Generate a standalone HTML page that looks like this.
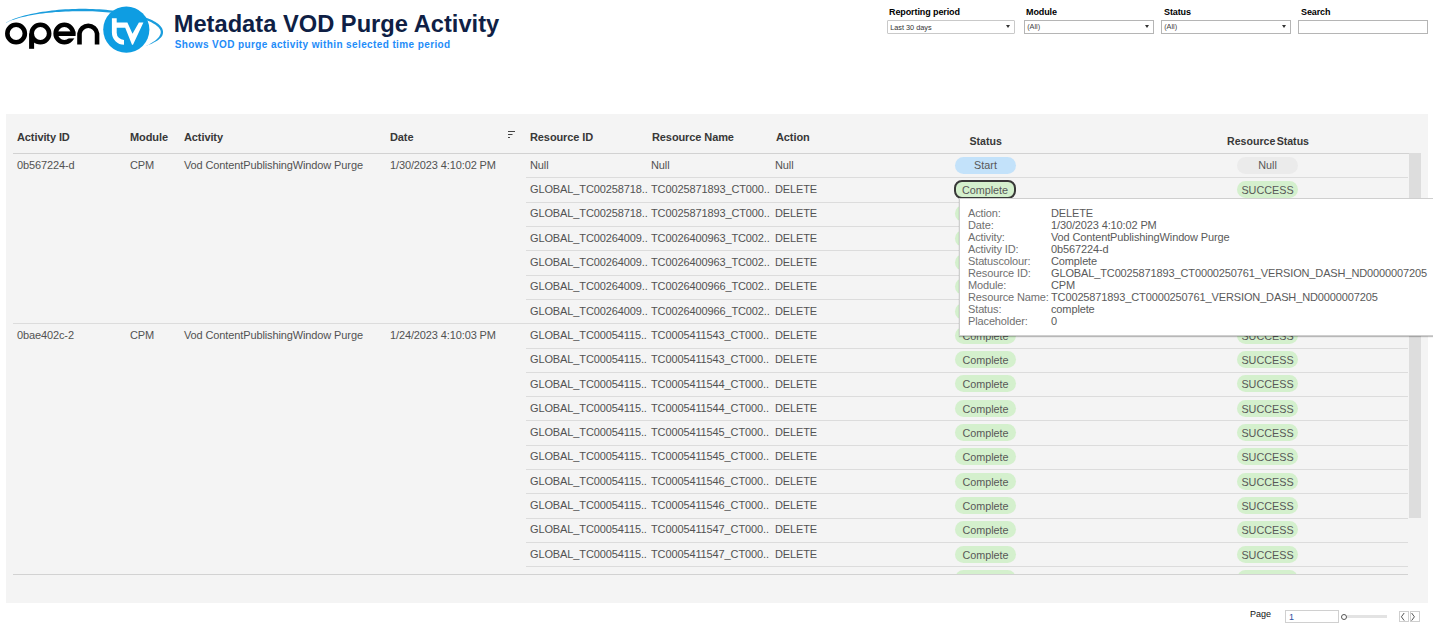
<!DOCTYPE html>
<html><head><meta charset="utf-8">
<style>
html,body{margin:0;padding:0;background:#fff;width:1433px;height:639px;overflow:hidden;position:relative;font-family:"Liberation Sans",sans-serif;}
div{position:absolute;white-space:nowrap;}
#title{left:173.7px;top:8.6px;font-size:23.7px;font-weight:bold;color:#0f1f45;line-height:30px;}
#sub{left:174.7px;top:37.6px;font-size:10px;font-weight:bold;color:#1e8cf8;line-height:14px;letter-spacing:0.39px;}
.fl{font-size:9px;font-weight:bold;color:#000;line-height:12px;top:6px;letter-spacing:-0.1px;}
.fb{top:20px;height:12px;background:#fff;border:1px solid #c9c9c9;border-radius:1px;}
.fb span{position:absolute;left:2.2px;top:1.5px;font-size:7.3px;color:#333;line-height:10px;}
.arr{width:0;height:0;border-left:2.5px solid transparent;border-right:2.5px solid transparent;border-top:3.5px solid #333;top:3.6px;}
#panel{left:6px;top:114px;width:1422px;height:489px;background:#f4f4f4;}
.h{font-size:11px;font-weight:bold;color:#383838;line-height:16px;letter-spacing:-0.1px;}
.t{font-size:11px;color:#525252;line-height:16px;letter-spacing:-0.12px;}
.sep{height:1px;background:#dcdcdc;}
.pill{width:61px;height:17px;border-radius:9px;text-align:center;font-size:10.8px;line-height:18.4px;color:#585858;}
.pb{background:#c3e2fa;}
.r0{line-height:16.8px;}
.pg{background:#d4f0cd;}
.pn{background:#ebebeb;}
.hov{box-sizing:border-box;border:2px solid #383838;width:62px;height:18.5px;margin-left:-1px;margin-top:-0.8px;border-radius:8px;line-height:16.2px;}
#tip{left:959px;top:198px;width:500px;height:136px;background:#fff;border:1px solid #cfcfcf;box-shadow:0 1px 1px rgba(0,0,0,0.25);}
.tl{left:8px;font-size:11px;line-height:12px;color:#707070;letter-spacing:-0.13px;}
.tv{left:91px;font-size:11px;line-height:12px;color:#5a5a5a;letter-spacing:-0.13px;}
</style></head><body>
<svg style="position:absolute;left:0;top:0" width="170" height="60" viewBox="0 0 170 60">
  <path d="M5.96 22.49 L7.67 21.65 L9.48 20.80 L11.40 19.95 L13.44 19.12 L15.60 18.31 L17.86 17.53 L20.23 16.78 L22.71 16.06 L25.28 15.36 L27.94 14.69 L30.69 14.06 L33.52 13.46 L36.43 12.89 L39.42 12.35 L42.47 11.85 L45.58 11.38 L48.76 10.95 L51.98 10.55 L55.25 10.19 L58.56 9.87 L61.91 9.59 L65.29 9.35 L68.69 9.14 L72.11 8.99 L75.54 8.90 L78.97 8.85 L82.41 8.84 L85.84 8.87 L89.26 8.93 L92.66 9.04 L96.04 9.19 L99.39 9.37 L102.71 9.59 L105.98 9.85 L109.21 10.15 L112.39 10.49 L115.51 10.86 L118.57 11.27 L121.57 11.71 L124.49 12.18 L127.34 12.70 L130.10 13.24 L132.78 13.82 L135.37 14.42 L137.86 15.06 L140.26 15.73 L142.55 16.42 L144.74 17.15 L146.82 17.90 L148.79 18.67 L150.64 19.47 L152.37 20.30 L153.99 21.14 L155.48 22.02 L156.84 22.91 L158.08 23.83 L159.19 24.77 L160.17 25.74 L161.02 26.74 L161.73 27.76 L162.29 28.81 L162.70 29.89 L162.96 30.99 L163.05 32.10 L162.97 33.22 L162.73 34.33 L162.33 35.41 L161.72 36.43 L160.96 37.41 L160.07 38.35 L159.05 39.26 L157.91 40.13 L156.65 40.98 L155.27 41.81 L153.77 42.61 L152.15 43.38 L150.41 44.14 L148.55 44.86 L146.62 45.66 L146.53 45.43 L148.45 44.63 L150.21 43.72 L151.84 42.79 L153.34 41.86 L154.70 40.92 L155.92 39.97 L157.01 39.02 L157.94 38.08 L158.73 37.15 L159.37 36.23 L159.87 35.34 L160.23 34.48 L160.52 33.68 L160.69 32.89 L160.75 32.12 L160.68 31.35 L160.50 30.56 L160.20 29.77 L159.76 28.96 L159.20 28.14 L158.49 27.31 L157.64 26.47 L156.66 25.63 L155.53 24.80 L154.27 23.97 L152.87 23.16 L151.35 22.35 L149.69 21.57 L147.91 20.80 L146.01 20.05 L143.99 19.32 L141.86 18.62 L139.62 17.94 L137.27 17.28 L134.82 16.66 L132.28 16.06 L129.64 15.49 L126.91 14.96 L124.10 14.45 L121.21 13.98 L118.25 13.54 L115.23 13.14 L112.13 12.77 L108.99 12.44 L105.79 12.15 L102.54 11.89 L99.25 11.67 L95.93 11.48 L92.58 11.34 L89.20 11.23 L85.81 11.17 L82.40 11.14 L78.99 11.15 L75.58 11.20 L72.18 11.29 L68.78 11.38 L65.40 11.51 L62.05 11.67 L58.72 11.88 L55.43 12.11 L52.17 12.39 L48.96 12.70 L45.80 13.04 L42.70 13.43 L39.65 13.84 L36.67 14.29 L33.77 14.77 L30.94 15.28 L28.19 15.82 L25.52 16.39 L22.95 16.99 L20.47 17.61 L18.09 18.27 L15.81 18.94 L13.63 19.64 L11.56 20.36 L9.60 21.09 L7.77 21.88 L6.08 22.71Z" fill="#1a9ddd"/>
  <g fill="none" stroke="#000" stroke-width="4.6">
    <circle cx="16.1" cy="33.5" r="8.75"/>
    <circle cx="40.4" cy="33.5" r="8.75"/>
    <circle cx="64.35" cy="33.5" r="8.7"/>
    <path d="M79.5 44.5 V33.5 A8.85 8.85 0 0 1 97.05 33.5 V44.5"/>
  </g>
  <rect x="29.1" y="33.5" width="5" height="15.3" fill="#000"/>
  <rect x="55" y="31.4" width="20.5" height="4.6" fill="#000"/>
  <rect x="67.5" y="36" width="9" height="2.4" fill="#fff"/>
  <circle cx="126.3" cy="29.6" r="23.1" fill="#0e9de2"/>
  <g fill="#fff">
    <path d="M111.9 18.2 H116.7 V22.4 H127.4 L132.5 33.7 L138.9 22.4 H143.4 L133 44.7 H132 L125.2 27.8 H116.7 V32.7 A7.3 7.3 0 0 0 124 40 V44.7 A12.1 12.1 0 0 1 111.9 32.7 Z"/>
  </g>
</svg>
<div id="title">Metadata VOD Purge Activity</div>
<div id="sub">Shows VOD purge activity within selected time period</div>

<div class="fl" style="left:889px">Reporting period</div>
<div class="fb" style="left:887px;width:126px"><span>Last 30 days</span><div class="arr" style="left:118px"></div></div>
<div class="fl" style="left:1026px">Module</div>
<div class="fb" style="left:1024px;width:128px;border-color:#b5b5b5;border-radius:0"><span style="top:0.6px;color:#444">(All)</span><div class="arr" style="left:120px"></div></div>
<div class="fl" style="left:1164px">Status</div>
<div class="fb" style="left:1161px;width:128px;border-color:#b5b5b5;border-radius:0"><span style="top:0.6px;color:#444">(All)</span><div class="arr" style="left:120px"></div></div>
<div class="fl" style="left:1301px">Search</div>
<div class="fb" style="left:1297.5px;width:128.5px;border-color:#b5b5b5;border-radius:0"></div>

<div id="panel"></div>
<div class="h" style="left:17px;top:129px">Activity ID</div>
<div class="h" style="left:130px;top:129px">Module</div>
<div class="h" style="left:184px;top:129px">Activity</div>
<div class="h" style="left:390px;top:129px">Date</div>
<div class="h" style="left:530px;top:129px">Resource ID</div>
<div class="h" style="left:652px;top:129px">Resource Name</div>
<div class="h" style="left:776px;top:129px">Action</div>
<div class="h" style="left:969.5px;top:133px;font-size:10.6px;letter-spacing:0">Status</div>
<div class="h" style="left:1227px;top:133px;font-size:10.6px;letter-spacing:0;word-spacing:-1.6px">Resource Status</div>
<svg style="position:absolute;left:507px;top:130px" width="10" height="9"><g fill="#444"><rect x="1" y="1" width="7" height="1"/><rect x="1" y="4" width="4.5" height="1"/><rect x="1" y="7" width="2" height="1"/></g></svg>
<div class="sep" style="left:13px;width:1408px;top:152.5px;background:#d2d2d2"></div>
<div style="left:1408.6px;top:153px;width:12.4px;height:364.6px;background:#dddddd"></div>
<div class="t" style="left:17px;top:156.80px">0b567224-d</div>
<div class="t" style="left:130px;top:156.80px">CPM</div>
<div class="t" style="left:184px;top:156.80px">Vod ContentPublishingWindow Purge</div>
<div class="t" style="left:390px;top:156.80px">1/30/2023 4:10:02 PM</div>
<div class="t" style="left:530px;top:156.80px">Null</div>
<div class="t" style="left:651px;top:156.80px">Null</div>
<div class="t" style="left:775px;top:156.80px">Null</div>
<div class="pill pb r0" style="left:955px;top:156.70px">Start</div>
<div class="pill pn r0" style="left:1237px;top:156.70px">Null</div>
<div class="t" style="left:530px;top:181.10px">GLOBAL_TC00258718..</div>
<div class="t" style="left:651px;top:181.10px">TC0025871893_CT000..</div>
<div class="t" style="left:775px;top:181.10px">DELETE</div>
<div class="pill pg hov" style="left:955px;top:181.00px">Complete</div>
<div class="pill pg" style="left:1237px;top:181.00px">SUCCESS</div>
<div class="t" style="left:530px;top:205.40px">GLOBAL_TC00258718..</div>
<div class="t" style="left:651px;top:205.40px">TC0025871893_CT000..</div>
<div class="t" style="left:775px;top:205.40px">DELETE</div>
<div class="pill pg" style="left:955px;top:205.30px">Complete</div>
<div class="pill pg" style="left:1237px;top:205.30px">SUCCESS</div>
<div class="t" style="left:530px;top:229.70px">GLOBAL_TC00264009..</div>
<div class="t" style="left:651px;top:229.70px">TC0026400963_TC002..</div>
<div class="t" style="left:775px;top:229.70px">DELETE</div>
<div class="pill pg" style="left:955px;top:229.60px">Complete</div>
<div class="pill pg" style="left:1237px;top:229.60px">SUCCESS</div>
<div class="t" style="left:530px;top:254.00px">GLOBAL_TC00264009..</div>
<div class="t" style="left:651px;top:254.00px">TC0026400963_TC002..</div>
<div class="t" style="left:775px;top:254.00px">DELETE</div>
<div class="pill pg" style="left:955px;top:253.90px">Complete</div>
<div class="pill pg" style="left:1237px;top:253.90px">SUCCESS</div>
<div class="t" style="left:530px;top:278.30px">GLOBAL_TC00264009..</div>
<div class="t" style="left:651px;top:278.30px">TC0026400966_TC002..</div>
<div class="t" style="left:775px;top:278.30px">DELETE</div>
<div class="pill pg" style="left:955px;top:278.20px">Complete</div>
<div class="pill pg" style="left:1237px;top:278.20px">SUCCESS</div>
<div class="t" style="left:530px;top:302.60px">GLOBAL_TC00264009..</div>
<div class="t" style="left:651px;top:302.60px">TC0026400966_TC002..</div>
<div class="t" style="left:775px;top:302.60px">DELETE</div>
<div class="pill pg" style="left:955px;top:302.50px">Complete</div>
<div class="pill pg" style="left:1237px;top:302.50px">SUCCESS</div>
<div class="t" style="left:17px;top:326.90px">0bae402c-2</div>
<div class="t" style="left:130px;top:326.90px">CPM</div>
<div class="t" style="left:184px;top:326.90px">Vod ContentPublishingWindow Purge</div>
<div class="t" style="left:390px;top:326.90px">1/24/2023 4:10:03 PM</div>
<div class="t" style="left:530px;top:326.90px">GLOBAL_TC00054115..</div>
<div class="t" style="left:651px;top:326.90px">TC0005411543_CT000..</div>
<div class="t" style="left:775px;top:326.90px">DELETE</div>
<div class="pill pg" style="left:955px;top:326.80px">Complete</div>
<div class="pill pg" style="left:1237px;top:326.80px">SUCCESS</div>
<div class="t" style="left:530px;top:351.20px">GLOBAL_TC00054115..</div>
<div class="t" style="left:651px;top:351.20px">TC0005411543_CT000..</div>
<div class="t" style="left:775px;top:351.20px">DELETE</div>
<div class="pill pg" style="left:955px;top:351.10px">Complete</div>
<div class="pill pg" style="left:1237px;top:351.10px">SUCCESS</div>
<div class="t" style="left:530px;top:375.50px">GLOBAL_TC00054115..</div>
<div class="t" style="left:651px;top:375.50px">TC0005411544_CT000..</div>
<div class="t" style="left:775px;top:375.50px">DELETE</div>
<div class="pill pg" style="left:955px;top:375.40px">Complete</div>
<div class="pill pg" style="left:1237px;top:375.40px">SUCCESS</div>
<div class="t" style="left:530px;top:399.80px">GLOBAL_TC00054115..</div>
<div class="t" style="left:651px;top:399.80px">TC0005411544_CT000..</div>
<div class="t" style="left:775px;top:399.80px">DELETE</div>
<div class="pill pg" style="left:955px;top:399.70px">Complete</div>
<div class="pill pg" style="left:1237px;top:399.70px">SUCCESS</div>
<div class="t" style="left:530px;top:424.10px">GLOBAL_TC00054115..</div>
<div class="t" style="left:651px;top:424.10px">TC0005411545_CT000..</div>
<div class="t" style="left:775px;top:424.10px">DELETE</div>
<div class="pill pg" style="left:955px;top:424.00px">Complete</div>
<div class="pill pg" style="left:1237px;top:424.00px">SUCCESS</div>
<div class="t" style="left:530px;top:448.40px">GLOBAL_TC00054115..</div>
<div class="t" style="left:651px;top:448.40px">TC0005411545_CT000..</div>
<div class="t" style="left:775px;top:448.40px">DELETE</div>
<div class="pill pg" style="left:955px;top:448.30px">Complete</div>
<div class="pill pg" style="left:1237px;top:448.30px">SUCCESS</div>
<div class="t" style="left:530px;top:472.70px">GLOBAL_TC00054115..</div>
<div class="t" style="left:651px;top:472.70px">TC0005411546_CT000..</div>
<div class="t" style="left:775px;top:472.70px">DELETE</div>
<div class="pill pg" style="left:955px;top:472.60px">Complete</div>
<div class="pill pg" style="left:1237px;top:472.60px">SUCCESS</div>
<div class="t" style="left:530px;top:497.00px">GLOBAL_TC00054115..</div>
<div class="t" style="left:651px;top:497.00px">TC0005411546_CT000..</div>
<div class="t" style="left:775px;top:497.00px">DELETE</div>
<div class="pill pg" style="left:955px;top:496.90px">Complete</div>
<div class="pill pg" style="left:1237px;top:496.90px">SUCCESS</div>
<div class="t" style="left:530px;top:521.30px">GLOBAL_TC00054115..</div>
<div class="t" style="left:651px;top:521.30px">TC0005411547_CT000..</div>
<div class="t" style="left:775px;top:521.30px">DELETE</div>
<div class="pill pg" style="left:955px;top:521.20px">Complete</div>
<div class="pill pg" style="left:1237px;top:521.20px">SUCCESS</div>
<div class="t" style="left:530px;top:545.60px">GLOBAL_TC00054115..</div>
<div class="t" style="left:651px;top:545.60px">TC0005411547_CT000..</div>
<div class="t" style="left:775px;top:545.60px">DELETE</div>
<div class="pill pg" style="left:955px;top:545.50px">Complete</div>
<div class="pill pg" style="left:1237px;top:545.50px">SUCCESS</div>
<div class="t" style="left:530px;top:569.90px">GLOBAL_TC00054115..</div>
<div class="t" style="left:651px;top:569.90px">TC0005411548_CT000..</div>
<div class="t" style="left:775px;top:569.90px">DELETE</div>
<div class="pill pg" style="left:955px;top:569.80px">Complete</div>
<div class="pill pg" style="left:1237px;top:569.80px">SUCCESS</div>
<div class="sep" style="left:526px;width:882px;top:177.00px"></div>
<div class="sep" style="left:526px;width:882px;top:202.00px"></div>
<div class="sep" style="left:526px;width:882px;top:226.00px"></div>
<div class="sep" style="left:526px;width:882px;top:250.00px"></div>
<div class="sep" style="left:526px;width:882px;top:275.00px"></div>
<div class="sep" style="left:526px;width:882px;top:299.00px"></div>
<div class="sep" style="left:13px;width:1395px;top:323.00px"></div>
<div class="sep" style="left:526px;width:882px;top:348.00px"></div>
<div class="sep" style="left:526px;width:882px;top:372.00px"></div>
<div class="sep" style="left:526px;width:882px;top:396.00px"></div>
<div class="sep" style="left:526px;width:882px;top:420.00px"></div>
<div class="sep" style="left:526px;width:882px;top:445.00px"></div>
<div class="sep" style="left:526px;width:882px;top:469.00px"></div>
<div class="sep" style="left:526px;width:882px;top:493.00px"></div>
<div class="sep" style="left:526px;width:882px;top:518.00px"></div>
<div class="sep" style="left:526px;width:882px;top:542.00px"></div>
<div class="sep" style="left:526px;width:882px;top:566.00px"></div>
<div style="left:6px;top:574px;width:1422px;height:29px;background:#f4f4f4"></div>
<div class="sep" style="left:13px;width:1395px;top:574px;background:#d2d2d2"></div>

<div id="tip">
<div class="tl" style="top:7.5px">Action:</div><div class="tv" style="top:7.5px">DELETE</div>
<div class="tl" style="top:19.5px">Date:</div><div class="tv" style="top:19.5px">1/30/2023 4:10:02 PM</div>
<div class="tl" style="top:31.5px">Activity:</div><div class="tv" style="top:31.5px">Vod ContentPublishingWindow Purge</div>
<div class="tl" style="top:43.5px">Activity ID:</div><div class="tv" style="top:43.5px">0b567224-d</div>
<div class="tl" style="top:55.5px">Statuscolour:</div><div class="tv" style="top:55.5px">Complete</div>
<div class="tl" style="top:67.5px">Resource ID:</div><div class="tv" style="top:67.5px">GLOBAL_TC0025871893_CT0000250761_VERSION_DASH_ND0000007205</div>
<div class="tl" style="top:79.5px">Module:</div><div class="tv" style="top:79.5px">CPM</div>
<div class="tl" style="top:91.5px">Resource Name:</div><div class="tv" style="top:91.5px">TC0025871893_CT0000250761_VERSION_DASH_ND0000007205</div>
<div class="tl" style="top:103.5px">Status:</div><div class="tv" style="top:103.5px">complete</div>
<div class="tl" style="top:115.5px">Placeholder:</div><div class="tv" style="top:115.5px">0</div>
</div>

<div style="left:1250px;top:608.3px;font-size:9px;color:#111;line-height:12px">Page</div>
<div style="left:1285px;top:610px;width:52px;height:11px;border:1px solid #d0d0d0;background:#fff"><span style="position:absolute;left:3px;top:0px;font-size:9px;color:#3050a0;line-height:12px">1</span></div>
<div style="left:1347px;top:615px;width:40px;height:3px;background:#e3e3e3"></div>
<div style="left:1340.5px;top:613.5px;width:4.5px;height:4.5px;border:1px solid #555;border-radius:50%;background:#fff"></div>
<div style="left:1398.8px;top:611.3px;width:8px;height:9px;border:1px solid #cfcfcf;background:#fff"></div>
<div style="left:1410.2px;top:611.3px;width:8px;height:9px;border:1px solid #cfcfcf;background:#fff"></div>
<svg style="position:absolute;left:1398px;top:610px" width="24" height="13"><path d="M6.2 3 L3.4 6.8 L6.2 10.6 M13.6 3 L16.4 6.8 L13.6 10.6" fill="none" stroke="#555" stroke-width="1"/></svg>
</body></html>
